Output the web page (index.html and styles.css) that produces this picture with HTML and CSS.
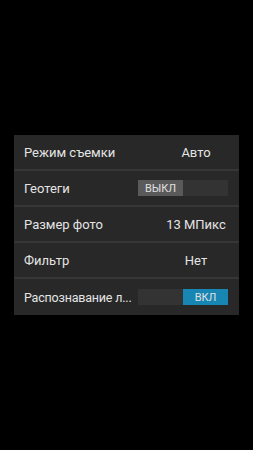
FILE: index.html
```html
<!DOCTYPE html>
<html>
<head>
<meta charset="utf-8">
<link rel="stylesheet" href="styles.css">
</head>
<body>
<div class="panel">
  <div class="row"><span class="label">Режим съемки</span><span class="value">Авто</span></div>
  <div class="row"><span class="label">Геотеги</span><span class="toggle"><span class="opt off">ВЫКЛ</span><span class="opt"></span></span></div>
  <div class="row"><span class="label">Размер фото</span><span class="value">13 МПикс</span></div>
  <div class="row"><span class="label">Фильтр</span><span class="value">Нет</span></div>
  <div class="row"><span class="label short">Распознавание л...</span><span class="toggle"><span class="opt"></span><span class="opt on">ВКЛ</span></span></div>
</div>
</body>
</html>
```
FILE: styles.css
```css
html, body { margin: 0; padding: 0; background: #000; height: 100%; }
body { font-family: Roboto, "Noto Sans", sans-serif; }
.panel {
  margin: 135px 0 0 14px;
  width: 225px;
  background: #282828;
  display: flex;
  flex-direction: column;
}
.row {
  height: 34px;
  display: flex;
  align-items: center;
  padding-left: 10px;
  border-bottom: 2px solid #363636;
}
.row:last-child { border-bottom: none; height: 36px; }
.label {
  flex: 0 0 114px;
  color: #e4e4e4;
  font-size: 13px;
  white-space: nowrap;
}
.label.short { font-size: 12.5px; letter-spacing: -0.2px; }
.value {
  width: 76px;
  margin-left: auto;
  margin-right: 5px;
  text-align: center;
  color: #e4e4e4;
  font-size: 13px;
}
.toggle {
  width: 90px;
  height: 16px;
  background: #333;
  display: flex;
}
.opt {
  flex: 1;
  display: flex;
  align-items: center;
  justify-content: center;
  font-size: 11px;
  color: #e0e0e0;
}
.opt.off { background: #5a5a5a; }
.opt.on { background: #1886b3; }
```
